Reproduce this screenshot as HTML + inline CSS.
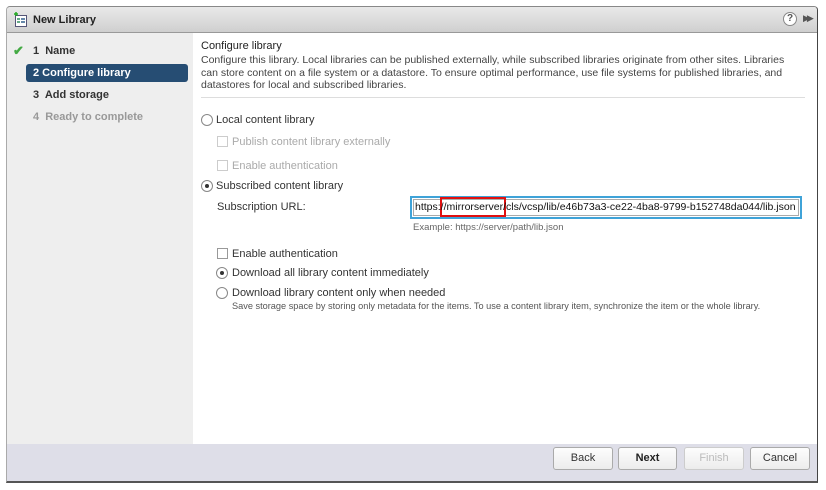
<!DOCTYPE html>
<html><head><meta charset="utf-8"><style>
*{margin:0;padding:0;box-sizing:border-box}
body{width:826px;height:490px;background:#fff;font-family:"Liberation Sans",Arial,sans-serif;font-size:11px;color:#333;position:relative;overflow:hidden}
.a{position:absolute;white-space:nowrap}
.win{position:absolute;left:6px;top:6px;width:812px;height:477px;border:1px solid #444;border-top-color:#888;border-left-color:#aaa;border-bottom:2px solid #555;border-radius:4px 4px 0 0;overflow:hidden;background:#fff}
.title{position:absolute;left:0;top:0;right:0;height:26px;background:linear-gradient(#e9e9e9,#cfcfcf);border-bottom:1px solid #999}
.left{position:absolute;left:0;top:26px;width:186px;height:411px;background:#eeeeee}
.foot{position:absolute;left:0;top:437px;right:0;height:38px;background:#dedee8}
.btn{position:absolute;top:447px;height:23px;border:1px solid #aaa;border-radius:3px;background:linear-gradient(#fdfdfd,#ececec);text-align:center;line-height:21px;font-size:11px;color:#333}
.rad{position:absolute;width:12px;height:12px;border:1px solid #888;border-radius:50%;background:#fff}
.rad.on::after{content:"";position:absolute;left:3px;top:3px;width:4px;height:4px;border-radius:50%;background:#333}
.cb{position:absolute;width:11px;height:11px;border:1px solid #999;background:#fff}
.cb.dis{border-color:#ccc}
.dis{color:#aaa}
</style></head><body>
<div class="win">
 <div class="title">
  <svg class="a" style="left:7px;top:5px" width="14" height="15" viewBox="0 0 14 15"><rect x="1.5" y="3.5" width="11" height="11" fill="#fff" stroke="#557"/><rect x="3" y="6" width="3" height="2" fill="#6a8"/><rect x="7" y="6" width="4" height="2" fill="#68a"/><rect x="3" y="9" width="3" height="2" fill="#6a8"/><rect x="7" y="9" width="4" height="2" fill="#68a"/><path d="M2 0v4M0 2h4" stroke="#2a2" stroke-width="1.5"/></svg>
  <div class="a" style="left:26px;top:7px;font-weight:bold;color:#222;font-size:11px">New Library</div>
  <div class="a" style="left:776px;top:5px;width:14px;height:14px;border:1px solid #888;border-radius:50%;background:#fff;font-size:10px;line-height:12px;text-align:center;font-weight:bold;color:#555">?</div>
  <div class="a" style="left:796px;top:6px;font-size:9px;color:#555;letter-spacing:-3px">▶▶</div>
 </div>
 <div class="left">
  <div class="a" style="left:6px;top:10px;color:#4a4;font-weight:bold;font-size:13px">✔</div>
  <div class="a" style="left:26px;top:12px;font-weight:bold;color:#333">1&nbsp; Name</div>
  <div class="a" style="left:19px;top:31px;width:162px;height:18px;background:#264d73;border-radius:3px"></div>
  <div class="a" style="left:26px;top:34px;font-weight:bold;color:#fff">2 Configure library</div>
  <div class="a" style="left:26px;top:56px;font-weight:bold;color:#333">3&nbsp; Add storage</div>
  <div class="a" style="left:26px;top:78px;font-weight:bold;color:#999">4&nbsp; Ready to complete</div>
 </div>
 <div class="foot"></div>
</div>
<div class="a" style="left:201px;top:40px;color:#222;font-size:11px">Configure library</div>
<div class="a" style="left:201px;top:54px;line-height:12.5px;white-space:normal;width:600px;color:#444;font-size:10.5px">Configure this library. Local libraries can be published externally, while subscribed libraries originate from other sites. Libraries can store content on a file system or a datastore. To ensure optimal performance, use file systems for published libraries, and datastores for local and subscribed libraries.</div>
<div class="a" style="left:201px;top:97px;width:604px;height:1px;background:#ddd"></div>

<div class="rad" style="left:201px;top:114px"></div>
<div class="a" style="left:216px;top:114px">Local content library</div>
<div class="cb dis" style="left:217px;top:136px"></div>
<div class="a dis" style="left:232px;top:136px">Publish content library externally</div>
<div class="cb dis" style="left:217px;top:160px"></div>
<div class="a dis" style="left:232px;top:160px">Enable authentication</div>
<div class="rad on" style="left:201px;top:180px"></div>
<div class="a" style="left:216px;top:180px">Subscribed content library</div>
<div class="a" style="left:217px;top:201px">Subscription URL:</div>
<div class="a" style="left:410px;top:196px;width:392px;height:23px;border:2px solid #3fa3d8;background:#fff"></div>
<div class="a" style="left:413px;top:199px;width:386px;height:17px;border:1px solid #aaa"></div>
<div class="a" style="left:440px;top:197px;width:66px;height:20px;border:2px solid #e01010"></div>
<div class="a" style="left:415px;top:201px;color:#111;font-size:10.5px">https://mirrorserver/cls/vcsp/lib/e46b73a3-ce22-4ba8-9799-b152748da044/lib.json</div>
<div class="a" style="left:413px;top:222px;font-size:9.5px;color:#666">Example: https://server/path/lib.json</div>
<div class="cb" style="left:217px;top:248px"></div>
<div class="a" style="left:232px;top:248px">Enable authentication</div>
<div class="rad on" style="left:216px;top:267px"></div>
<div class="a" style="left:232px;top:267px">Download all library content immediately</div>
<div class="rad" style="left:216px;top:287px"></div>
<div class="a" style="left:232px;top:287px">Download library content only when needed</div>
<div class="a" style="left:232px;top:301px;font-size:9.2px;color:#555">Save storage space by storing only metadata for the items. To use a content library item, synchronize the item or the whole library.</div>

<div class="btn" style="left:553px;width:60px">Back</div>
<div class="btn" style="left:618px;width:59px;font-weight:bold;color:#222">Next</div>
<div class="btn" style="left:684px;width:60px;color:#bbb;border-color:#ccc">Finish</div>
<div class="btn" style="left:750px;width:60px">Cancel</div>
</body></html>
